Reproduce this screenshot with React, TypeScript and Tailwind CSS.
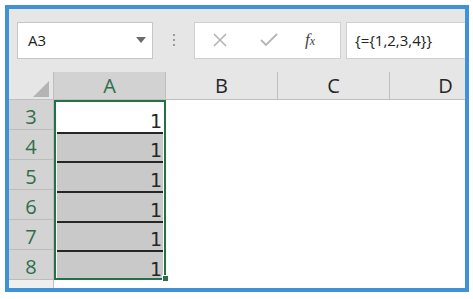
const rows = [3, 4, 5, 6, 7, 8];
const font = { fontFamily: '"Open Sans", "Liberation Sans", sans-serif' };

function Header({ label, active }: { label: string; active?: boolean }) {
  return (
    <div
      className={`flex w-[112px] shrink-0 items-center justify-center border-r border-[#bfbfbf] text-[20px] ${
        active ? 'bg-[#d2d2d2] text-[#2f6e4a]' : 'text-[#262626]'
      }`}
    >
      {label}
    </div>
  );
}

export default function App() {
  return (
    <div className="h-[299px] w-[473px] bg-white pl-[5px] pt-[5px]" style={font}>
      <div className="flex h-[287px] w-[464px] flex-col overflow-hidden border-4 border-[#3f92d5] bg-white">
        {/* formula bar */}
        <div className="flex h-[63px] shrink-0 items-center bg-[#e6e6e6] pb-[1px] pl-[8px]">
          <div className="flex h-[37px] w-[136px] items-center justify-between border border-[#c6c6c6] bg-white pl-[10px] pr-[6px] text-[15px] text-[#222]">
            <span>A3</span>
            <svg width="10" height="6" viewBox="0 0 10 6">
              <path d="M0 0h10L5 6z" fill="#6b6b6b" />
            </svg>
          </div>
          <div className="flex w-[41px] flex-col items-center gap-[3px]">
            <span className="h-[2px] w-[2px] bg-[#9a9a9a]" />
            <span className="h-[2px] w-[2px] bg-[#9a9a9a]" />
            <span className="h-[2px] w-[2px] bg-[#9a9a9a]" />
          </div>
          <div className="flex h-[37px] w-[147px] items-center border border-[#d0d0d0] bg-white">
            <svg className="ml-[17px]" width="16" height="16" viewBox="0 0 16 16">
              <path d="M2 2l12 12M14 2L2 14" stroke="#b5b5b5" strokeWidth="1.6" />
            </svg>
            <svg className="ml-[32px]" width="18" height="14" viewBox="0 0 18 14">
              <path d="M1 7l5 5L17 1" stroke="#b5b5b5" strokeWidth="1.8" fill="none" />
            </svg>
            <span
              className="ml-[27px] text-[17px] italic text-[#444]"
              style={{ fontFamily: '"Liberation Serif", serif' }}
            >
              f<span className="text-[12px]">x</span>
            </span>
          </div>
          <div className="ml-[5px] flex h-[37px] flex-1 items-center border border-r-0 border-[#d0d0d0] bg-white pl-[8px] text-[15px] text-[#222]">
            {'{={1,2,3,4}}'}
          </div>
        </div>

        {/* column headers */}
        <div className="flex h-[28px] shrink-0 border-b border-[#bfbfbf] bg-[#e6e6e6]">
          <div className="flex w-[45px] shrink-0 items-end justify-end border-r border-[#bfbfbf] pb-[2px] pr-[4px]">
            <svg width="16" height="16" viewBox="0 0 16 16">
              <path d="M16 0v16H0z" fill="#b4b4b4" />
            </svg>
          </div>
          <Header label="A" active />
          <Header label="B" />
          <Header label="C" />
          <Header label="D" />
        </div>

        {/* grid */}
        <div className="flex flex-1">
          <div className="flex w-[45px] shrink-0 flex-col border-r border-[#bfbfbf]">
            {rows.map((r) => (
              <div
                key={r}
                className="flex h-[30px] items-end justify-center border-b border-[#bcbcbc] bg-[#d3d3d3] pb-[2px] text-[20px] leading-none text-[#2f6e4a]"
              >
                {r}
              </div>
            ))}
            <div className="flex-1 bg-[#efefef]" />
          </div>
          <div className="relative w-[112px] shrink-0">
            <div className="flex h-[180px] flex-col px-[3px] pt-[2px]">
              {rows.map((r, i) => (
                <div
                  key={r}
                  className={`flex h-[30px] items-end justify-end pb-[1px] pr-[1px] font-['DejaVu_Sans',sans-serif] text-[19px] leading-none text-[#262626] ${
                    i === 0 ? 'bg-white' : 'border-t-2 border-[#262626] bg-[#c9c9c9]'
                  }`}
                >
                  1
                </div>
              ))}
            </div>
            <div className="pointer-events-none absolute left-0 top-0 h-[180px] w-[112px] border-2 border-[#217346]" />
            <div className="absolute left-[108px] top-[175px] h-[7px] w-[7px] border border-white bg-[#217346]" />
          </div>
          <div className="flex-1 bg-white" />
        </div>
      </div>
    </div>
  );
}
